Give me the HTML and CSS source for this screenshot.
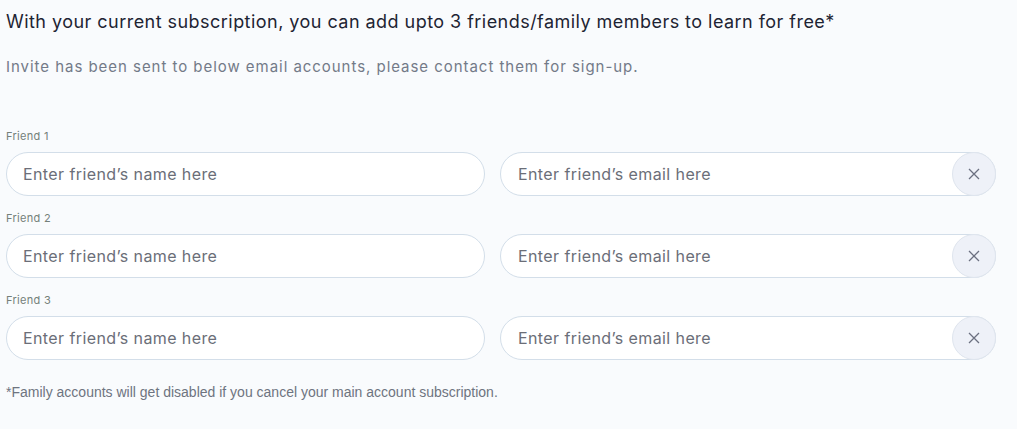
FILE: index.html
```html
<!DOCTYPE html>
<html lang="en">
<head>
  <meta charset="UTF-8">
  <meta name="viewport" content="width=device-width, initial-scale=1.0">
  <title>Invite Friends</title>
  <link rel="stylesheet" href="styles.css">
</head>
<body>
  <div class="invite-container">
    <h2 class="invite-title">With your current subscription, you can add upto 3 friends/family members to learn for free*</h2>
    <p class="invite-note">Invite has been sent to below email accounts, please contact them for sign-up.</p>

    <div class="friend-list">
      <div class="friend-item">
        <label>Friend 1</label>
        <div class="friend-row">
          <input type="text" class="field" placeholder="Enter friend’s name here">
          <div class="email-wrap">
            <input type="email" class="field" placeholder="Enter friend’s email here">
            <button class="remove-btn" aria-label="Remove">
              <svg width="12" height="12" viewBox="0 0 12 12"><path d="M1 1L11 11M11 1L1 11" stroke="#6b7080" stroke-width="1.3" fill="none"/></svg>
            </button>
          </div>
        </div>
      </div>
      <div class="friend-item">
        <label>Friend 2</label>
        <div class="friend-row">
          <input type="text" class="field" placeholder="Enter friend’s name here">
          <div class="email-wrap">
            <input type="email" class="field" placeholder="Enter friend’s email here">
            <button class="remove-btn" aria-label="Remove">
              <svg width="12" height="12" viewBox="0 0 12 12"><path d="M1 1L11 11M11 1L1 11" stroke="#6b7080" stroke-width="1.3" fill="none"/></svg>
            </button>
          </div>
        </div>
      </div>
      <div class="friend-item">
        <label>Friend 3</label>
        <div class="friend-row">
          <input type="text" class="field" placeholder="Enter friend’s name here">
          <div class="email-wrap">
            <input type="email" class="field" placeholder="Enter friend’s email here">
            <button class="remove-btn" aria-label="Remove">
              <svg width="12" height="12" viewBox="0 0 12 12"><path d="M1 1L11 11M11 1L1 11" stroke="#6b7080" stroke-width="1.3" fill="none"/></svg>
            </button>
          </div>
        </div>
      </div>
    </div>

    <p class="footnote">*Family accounts will get disabled if you cancel your main account subscription.</p>
  </div>
</body>
</html>
```

FILE: styles.css
```css
body {
  margin: 0;
  padding: 0;
  background-color: #f9fbfd;
  font-family: Inter, "Open Sans", sans-serif;
}

.invite-container {
  padding: 9px 21px 0 6px;
}

.invite-title {
  margin: 0;
  font-size: 18px;
  font-weight: 400;
  line-height: 26px;
  color: #1e2433;
  letter-spacing: 0.46px;
}

.invite-note {
  margin: 21px 0 0;
  font-size: 15px;
  line-height: 22px;
  color: #737a88;
  letter-spacing: 0.96px;
}

.friend-list {
  margin-top: 50px;
}

.friend-item label {
  display: block;
  font-size: 11px;
  line-height: 16px;
  color: #74807a;
  letter-spacing: 0.3px;
  margin-bottom: 8px;
}

.friend-item + .friend-item {
  margin-top: 14px;
}

.friend-row {
  display: grid;
  grid-template-columns: 479px 496px;
  gap: 15px;
}

.field {
  box-sizing: border-box;
  width: 100%;
  height: 44px;
  padding: 0 16px;
  border: 1px solid #d3dee9;
  border-radius: 22px;
  background: #fff;
  font-family: inherit;
  font-size: 16px;
  letter-spacing: 0.4px;
  color: #333;
  outline: none;
}

.field::placeholder {
  color: #6b6e78;
}

.email-wrap {
  position: relative;
}

.email-wrap .field {
  padding-left: 17px;
  padding-right: 52px;
}

.remove-btn {
  position: absolute;
  top: 0;
  right: 0;
  width: 44px;
  height: 44px;
  border-radius: 50%;
  border: 1px solid #dfe5ee;
  background: #eef1f8;
  display: flex;
  align-items: center;
  justify-content: center;
  padding: 0;
  cursor: pointer;
}

.footnote {
  margin: 24px 0 0;
  font-family: "Liberation Sans", Arial, sans-serif;
  font-size: 14px;
  line-height: 16px;
  color: #6e7480;
}
```
